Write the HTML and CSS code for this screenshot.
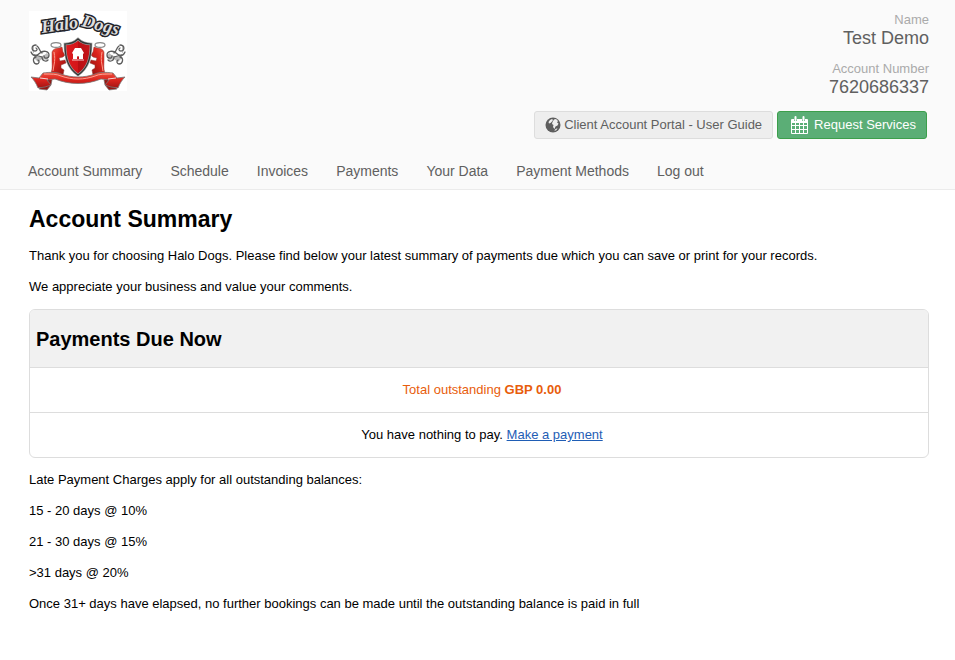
FILE: index.html
```
<!DOCTYPE html>
<html lang="en">
<head>
<meta charset="utf-8">
<meta name="viewport" content="width=device-width, initial-scale=1">
<title>Account Summary - Halo Dogs</title>
<link rel="stylesheet" href="styles.css">
</head>
<body>
<header class="header">
  <div class="banner">
    <svg class="logo" viewBox="0 0 98 80" role="img" aria-label="Halo Dogs">
      <defs>
        <linearGradient id="red" x1="0" y1="0" x2="1" y2="1">
          <stop offset="0" stop-color="#f2604c"/>
          <stop offset=".4" stop-color="#dd231c"/>
          <stop offset="1" stop-color="#8d100f"/>
        </linearGradient>
        <linearGradient id="ribbon" x1="0" y1="0" x2="0" y2="1">
          <stop offset="0" stop-color="#f0503f"/>
          <stop offset=".5" stop-color="#d9231d"/>
          <stop offset="1" stop-color="#a31513"/>
        </linearGradient>
        <linearGradient id="shield" x1="0" y1="0" x2="1" y2="0">
          <stop offset="0" stop-color="#e01a1e"/>
          <stop offset=".5" stop-color="#d3151a"/>
          <stop offset=".52" stop-color="#b80f14"/>
          <stop offset="1" stop-color="#c9151a"/>
        </linearGradient>
        <g id="supporter">
          <path d="M23 41c1-3 4-4 7-4l3-1 1 5 2 3-2 2-4 1 1 3 5-1 1 3-5 2v3l3 2-1 5H21c3-5 2-10 2-15 0-3 0-5 0-8z" fill="url(#red)" stroke="#8d3833" stroke-width=".5"/>
          <path d="M25 41c1 5 1 8 0 13l-1 6" fill="none" stroke="#ff9c8b" stroke-width="1"/>
          <ellipse cx="27" cy="34" rx="5" ry="2.4" fill="#fff" stroke="#888" stroke-width="1.2"/>
          <path d="M5 34c-3 3-2 7 1 10 4 3 9 1 12-2l2 3-2 4-5-1-4 3-4-4z" fill="#bbb"/>
          <g fill="none" stroke="#5c5c5c" stroke-width="1.3" stroke-linecap="round">
            <path d="M7 34c-5 0-5 6-1 6 2 0 3-2 1-3M2 41c2 5 6 4 9 1 3-3 9-2 9 2s-5 4-5 1M7 46c-4 1-3 7 1 7 2 0 3-3 1-4M13 46c0 4 4 5 6 3M8 35c3 2 2 5 5 7M6 44l7 2"/>
          </g>
        </g>
      </defs>
      <rect width="98" height="80" fill="#fff"/>
      <use href="#supporter"/>
      <use href="#supporter" transform="matrix(-1 0 0 1 98 0)"/>
      <path d="M49 28c-4 4-8 5-13 5 0 14 3 24 13 31 10-7 13-17 13-31-5 0-9-1-13-5z" fill="url(#shield)" stroke="#999" stroke-width="2.6"/>
      <path d="M49 28c-4 4-8 5-13 5 0 14 3 24 13 31 10-7 13-17 13-31-5 0-9-1-13-5z" fill="none" stroke="#333" stroke-width="1.2"/>
      <path d="M46 37h6l3 5-1 1v5h-4v-2q-1-2-2 0v2h-4v-5l-1-1z" fill="#fff"/>
      <path d="M43 49h12" stroke="#fff" stroke-width=".8"/>
      <path d="M11 67l6-3 6 5-1 5-4 5-8-1 4-4zM87 67l-6-3-6 5 1 5 4 5 8-1-4-4z" fill="#951713" stroke="#777" stroke-width=".7"/>
      <path d="M14 62c7-1 14-1 18 1 11 4 23 4 34 0 4-2 11-2 18-1l4 5 8-1c-3 3-5 6-7 11l-7-1-6-2 4-5-8-1c-15 6-31 6-46 0l-8 1 4 5-6 2-7 1c-2-5-4-8-7-11l8 1z" fill="url(#ribbon)" stroke="#777" stroke-width=".8" stroke-linejoin="round"/>
      <path d="M15 63c7 0 13 0 17 2 11 4 23 4 34 0 4-2 10-2 17-2" fill="none" stroke="#ffad9d" stroke-width=".9"/>
      <path d="M11 67l8 1M87 67l-8 1" stroke="#fff" stroke-width=".8"/>
      <g class="logo-name">
        <text x="13" y="22" transform="rotate(-8 13 22)">Halo</text>
        <text x="52" y="15" transform="rotate(14 52 15)">Dogs</text>
      </g>
    </svg>
    <dl class="account">
      <div class="account-item"><dt>Name</dt><dd>Test Demo</dd></div>
      <div class="account-item"><dt>Account Number</dt><dd>7620686337</dd></div>
    </dl>
  </div>
  <div class="actions">
    <a class="button guide" href="#guide">
      <svg class="globe" viewBox="0 0 16 16" aria-hidden="true">
        <circle cx="8" cy="8" r="7.500" fill="#5e5e5e"/>
        <path d="M5 3l2-1 1 1-1 1.500L5.500 6 4 6.500 3.500 5zM9 2.500l2-.5 2 2-1 1.500 1.500 1-1 2-2 1-1 2.500-1.500-2 .5-2-1.500-1L7.500 5zM10 12.500l2.500-1.500-1 2-2 1z" fill="#eee"/>
      </svg>
      Client Account Portal - User Guide
    </a>
    <a class="button request" href="#request">
      <svg class="calendar" viewBox="0 0 17 18" aria-hidden="true">
        <path d="M1 3h15q1 0 1 1v13q0 1-1 1H1q-1 0-1-1V4q0-1 1-1z" fill="#fff"/>
        <path d="M3 2h3v3H3zM11 2h3v3h-3z" fill="#5bae76"/>
        <path d="M4.500 1v3M12.500 1v3" fill="none" stroke="#fff" stroke-width="2" stroke-linecap="round"/>
        <path d="M1 7h3v2H1zM5 7h3v2H5zM9 7h3v2H9zM13 7h3v2h-3zM1 10h3v3H1zM5 10h3v3H5zM9 10h3v3H9zM13 10h3v3h-3zM1 14h3v3H1zM5 14h3v3H5zM9 14h3v3H9zM13 14h3v3h-3z" fill="#5bae76"/>
      </svg>
      Request Services
    </a>
  </div>
  <nav class="nav" aria-label="Main">
    <a href="#summary">Account Summary</a>
    <a href="#schedule">Schedule</a>
    <a href="#invoices">Invoices</a>
    <a href="#payments">Payments</a>
    <a href="#data">Your Data</a>
    <a href="#methods">Payment Methods</a>
    <a href="#logout">Log out</a>
  </nav>
</header>
<main class="content">
  <h1>Account Summary</h1>
  <p>Thank you for choosing Halo Dogs. Please find below your latest summary of payments due which you can save or print for your records.</p>
  <p>We appreciate your business and value your comments.</p>
  <section class="panel">
    <h2>Payments Due Now</h2>
    <div class="panel-row total">Total outstanding <strong>GBP 0.00</strong></div>
    <div class="panel-row">You have nothing to pay. <a href="#pay">Make a payment</a></div>
  </section>
  <p>Late Payment Charges apply for all outstanding balances:</p>
  <p>15 - 20 days @ 10%</p>
  <p>21 - 30 days @ 15%</p>
  <p>&gt;31 days @ 20%</p>
  <p>Once 31+ days have elapsed, no further bookings can be made until the outstanding balance is paid in full</p>
</main>
</body>
</html>
```
FILE: styles.css
```
* {
  box-sizing: border-box;
}

body {
  margin: 0;
  background: #fff;
  color: #000;
  font: 13px/16px "Liberation Sans", Arial, sans-serif;
}

.header {
  padding: 11px 26px 0 28px;
  background: #fafafa;
  border-bottom: 1px solid #ebebeb;
}

.banner {
  display: flex;
  justify-content: space-between;
  align-items: flex-start;
}

.logo {
  width: 98px;
  height: 80px;
  margin-left: 1px;
}

.logo-name {
  fill: #ddd;
  stroke: #25252b;
  stroke-width: 3px;
  paint-order: stroke;
  font: italic bold 18px "Liberation Serif", serif;
}

.account {
  margin: 0;
  padding-top: 1px;
  text-align: right;
}

.account-item {
  height: 49px;
}

.account dt {
  color: #aaa;
}

.account dd {
  margin: 0;
  color: #606060;
  font-size: 18px;
  line-height: 21px;
}

.actions {
  display: flex;
  justify-content: flex-end;
  gap: 4px;
  margin: 1px 2px 0 0;
}

.button {
  display: flex;
  align-items: center;
  height: 28px;
  padding: 0 10px;
  border: 1px solid #ddd;
  border-radius: 3px;
  text-decoration: none;
}

.guide {
  gap: 3px;
  background: #eee;
  color: #606060;
}

.request {
  gap: 6px;
  padding: 0 10px 0 13px;
  background: #5bae76;
  border-color: #3c9f4b;
  color: #fff;
}

.globe {
  width: 16px;
  height: 16px;
}

.calendar {
  width: 17px;
  height: 18px;
}

.nav {
  display: flex;
  flex-wrap: wrap;
  gap: 0 28px;
  padding: 24px 0 10px;
  font-size: 14px;
}

.nav a {
  color: #606060;
  text-decoration: none;
}

.content {
  padding: 16px 26px 16px 29px;
}

h1 {
  margin: 0 0 16px;
  font-size: 23px;
  line-height: 26px;
}

p {
  margin: 0 0 15px;
}

.panel {
  margin: -1px 0 14px;
  border: 1px solid #ddd;
  border-radius: 6px;
  overflow: hidden;
}

h2 {
  margin: 0;
  padding: 17px 6px 16px;
  background: #f1f1f1;
  font-size: 20px;
  line-height: 24px;
}

.panel-row {
  padding: 14px 6px 14px 12px;
  border-top: 1px solid #ddd;
  text-align: center;
}

.total {
  color: #e85d0c;
}

.panel a {
  color: #1f5db5;
}
```
